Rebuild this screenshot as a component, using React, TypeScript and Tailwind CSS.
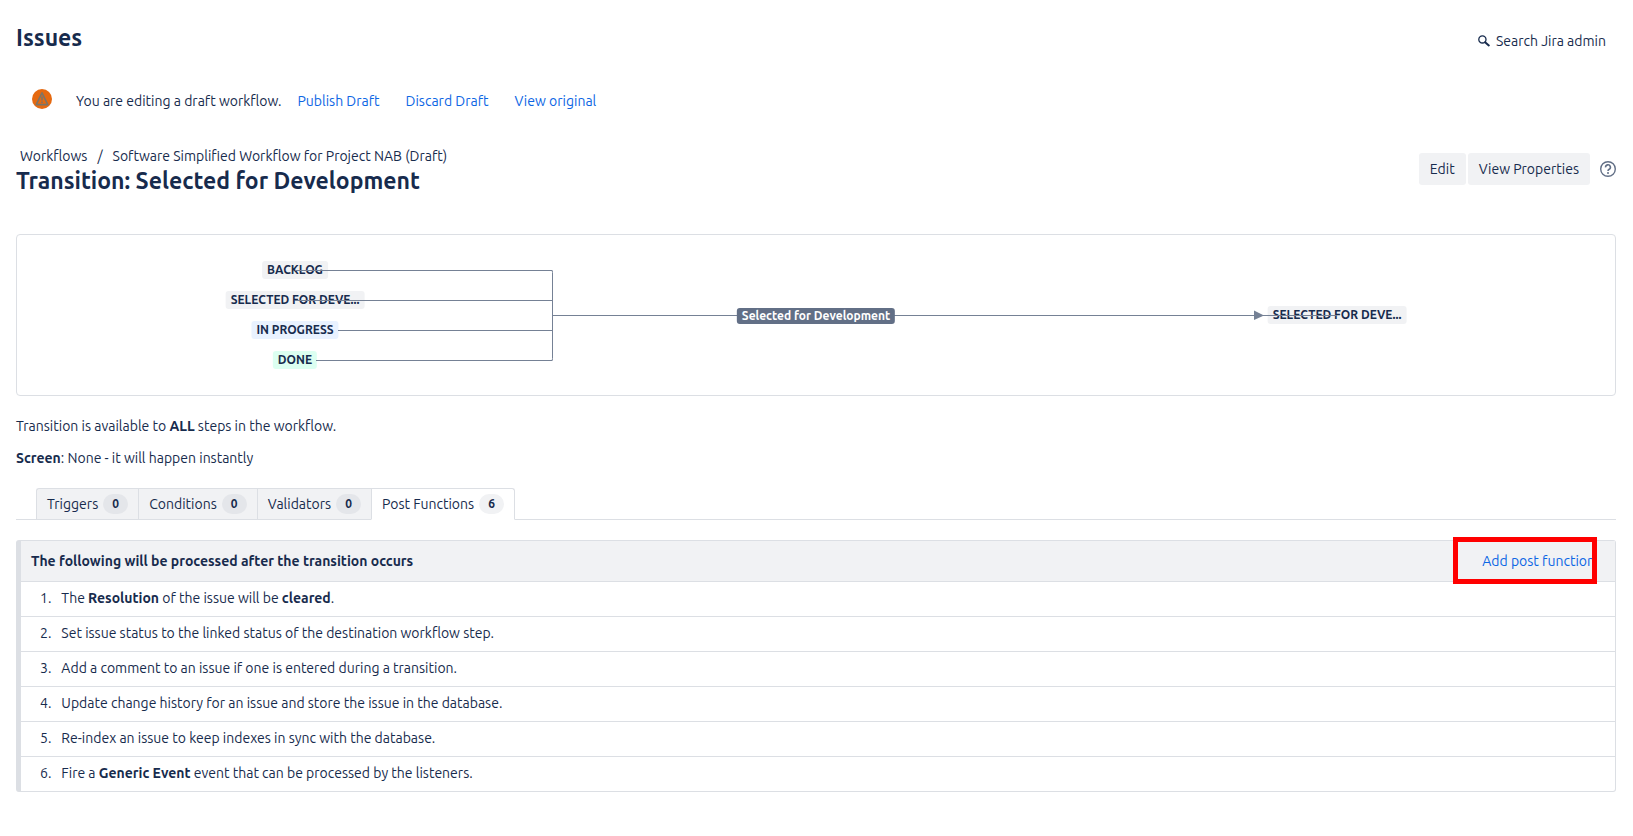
import React from 'react';

interface Tab {
  label: string;
  count: number;
}

interface StatusNode {
  label: string;
  y: number;
  lineStart: number;
  color: string;
}

const CENTER_X = 278;

const tabs: Tab[] = [
  { label: 'Triggers', count: 0 },
  { label: 'Conditions', count: 0 },
  { label: 'Validators', count: 0 },
  { label: 'Post Functions', count: 6 },
];

const sources: StatusNode[] = [
  { label: 'BACKLOG', y: 36, lineStart: CENTER_X, color: 'bg-[#f1f2f4]' },
  { label: 'SELECTED FOR DEVE...', y: 66, lineStart: CENTER_X, color: 'bg-[#f1f2f4]' },
  { label: 'IN PROGRESS', y: 96, lineStart: 321, color: 'bg-[#e9f2ff]' },
  { label: 'DONE', y: 126, lineStart: 299, color: 'bg-[#dcfff1]' },
];

const postFunctions: React.ReactNode[] = [
  <>The <strong>Resolution</strong> of the issue will be <strong>cleared</strong>.</>,
  'Set issue status to the linked status of the destination workflow step.',
  'Add a comment to an issue if one is entered during a transition.',
  'Update change history for an issue and store the issue in the database.',
  'Re-index an issue to keep indexes in sync with the database.',
  <>Fire a <strong>Generic Event</strong> event that can be processed by the listeners.</>,
];

const WarningIcon = () => (
  <svg className="w-5 h-5" viewBox="0 0 20 20" fill="none">
    <circle cx="10" cy="10" r="10" fill="#e56910" />
    <path d="M10 3.8 15.8 15.6H4.2Z" stroke="#7d7466" strokeWidth="1.6" strokeLinejoin="round" />
    <path d="M10 7.5V11.5M10 12.6V14.1" stroke="#7d7466" strokeWidth="1.6" />
  </svg>
);

const SearchIcon = () => (
  <svg className="w-3 h-3" viewBox="0 0 12 12" fill="none" stroke="#172b4d">
    <circle cx="4.4" cy="4.4" r="3.6" strokeWidth="1.3" />
    <path d="M7.4 7.4 10.8 10.4" strokeWidth="2" strokeLinecap="round" />
  </svg>
);

const HelpIcon = () => (
  <svg className="w-4 h-4" viewBox="0 0 16 16" fill="none" stroke="#626f86">
    <circle cx="8" cy="8" r="7.3" strokeWidth="1.4" />
    <path d="M5.6 6.4a2.4 2.4 0 1 1 3.6 1.9C8.3 8.8 8 9.1 8 10" strokeWidth="1.6" />
    <circle cx="8" cy="12" r="1" fill="#626f86" stroke="none" />
  </svg>
);

const StatusLabel = ({ label, color }: { label: string; color: string }) => (
  <span className={`block rounded-[3px] px-[5px] text-xs leading-[18px] font-bold whitespace-nowrap ${color}`}>{label}</span>
);

const WorkflowDiagram = () => (
  <div className="relative mt-[38px] h-[162px] overflow-hidden rounded border border-[#dcdfe4]">
    {sources.map(s => (
      <div key={s.label} className="absolute -translate-x-1/2 -translate-y-1/2" style={{ left: CENTER_X, top: s.y - 1 }}>
        <StatusLabel label={s.label} color={s.color} />
      </div>
    ))}
    <div className="absolute top-[80px] left-[1320px] -translate-x-1/2 -translate-y-1/2">
      <StatusLabel label="SELECTED FOR DEVE..." color="bg-[#f1f2f4]" />
    </div>
    <svg className="absolute top-0 left-0" width="1598" height="160" fill="none" stroke="#758195">
      {sources.map(s => (
        <path key={s.label} d={`M${s.lineStart} ${s.y - 0.5}H535.5`} />
      ))}
      <path d="M534.5 35.5Q535.5 35.5 535.5 37.5V123.5Q535.5 125.5 534.5 125.5" />
      <path d="M535.5 80.5H1320" />
      <path d="M1237 75.5 1247 80.5 1237 85Z" fill="#758195" stroke="none" />
    </svg>
    <span className="absolute top-[81px] left-[799px] -translate-x-1/2 -translate-y-1/2 rounded-[3px] bg-[#626f86] px-[5px] text-xs leading-4 font-bold whitespace-nowrap text-white">
      Selected for Development
    </span>
  </div>
);

const Tabs = () => (
  <div role="tablist" className="mt-5 flex border-b border-[#dcdfe4] pl-5">
    {tabs.map((tab, i) => {
      const active = tab.label === 'Post Functions';
      return (
        <button
          key={tab.label}
          role="tab"
          aria-selected={active}
          className={`-mb-px flex h-8 items-center gap-[5px] border-t border-b border-l border-[#dcdfe4] px-[10px] ${i === 0 ? 'rounded-tl-[3px]' : ''} ${active ? 'rounded-tr-[3px] border-r border-b-white bg-white' : 'bg-[#f1f2f4]'}`}
        >
          {tab.label}
          <span className={`w-[25px] rounded-full text-center text-xs leading-5 font-bold ${active ? 'bg-[#f1f2f4]' : 'bg-[#e4e6ea]'}`}>{tab.count}</span>
        </button>
      );
    })}
  </div>
);

const App: React.FC = () => {
  return (
    <div className="min-h-screen bg-white pt-6 pr-[17px] pl-4 font-['Ubuntu','Noto_Sans',sans-serif] text-sm leading-5 text-[#172b4d]">
      <header className="flex items-start justify-between">
        <h1 className="text-[23px] leading-7 font-semibold">Issues</h1>
        <button className="mt-[7px] mr-[10px] flex items-center gap-[6px]">
          <SearchIcon />
          Search Jira admin
        </button>
      </header>

      <div className="mt-[37px] flex items-start pl-4">
        <WarningIcon />
        <p className="mt-[2px] ml-6">You are editing a draft workflow.</p>
        <nav className="mt-[2px] ml-4 flex gap-[26px] text-[#0c66e4]">
          <a href="#publish">Publish Draft</a>
          <a href="#discard">Discard Draft</a>
          <a href="#original">View original</a>
        </nav>
      </div>

      <div className="mt-[35px] flex items-start justify-between">
        <div>
          <nav className="flex gap-[10px] pl-1">
            <a href="#workflows">Workflows</a>
            <span>/</span>
            <a href="#workflow">Software Simplified Workflow for Project NAB (Draft)</a>
          </nav>
          <h2 className="text-[23px] leading-[30px] font-semibold">Transition: Selected for Development</h2>
        </div>
        <div className="mt-[7px] flex items-center">
          <button className="h-8 rounded-[3px] bg-[#f1f2f4] px-[11px]">Edit</button>
          <button className="ml-[2px] h-8 rounded-[3px] bg-[#f1f2f4] px-[11px]">View Properties</button>
          <a href="#help" aria-label="Help" className="ml-[10px]"><HelpIcon /></a>
        </div>
      </div>

      <WorkflowDiagram />

      <p className="mt-5">Transition is available to <strong>ALL</strong> steps in the workflow.</p>
      <p className="mt-3"><strong>Screen</strong>: None - it will happen instantly</p>

      <Tabs />

      <section className="relative mt-5 rounded-[3px] border border-l-[5px] border-[#dcdfe4]">
        <div className="flex h-[41px] items-center justify-between border-b border-[#dcdfe4] bg-[#f1f2f4] pr-5 pl-[10px]">
          <h3 className="font-bold">The following will be processed after the transition occurs</h3>
          <a href="#add" className="text-[#0c66e4]">Add post function</a>
        </div>
        <div className="pointer-events-none absolute -top-1 right-[18px] h-[47px] w-[144px] border-[5px] border-[#ff0000]"></div>
        <ol>
          {postFunctions.map((item, i) => (
            <li key={i} className="flex gap-[10px] border-b border-[#dcdfe4] pt-[7px] pb-2 pl-[19px] leading-[19px] last:border-b-0">
              <span>{i + 1}.</span>
              <span>{item}</span>
            </li>
          ))}
        </ol>
      </section>
    </div>
  );
};

export default App;
